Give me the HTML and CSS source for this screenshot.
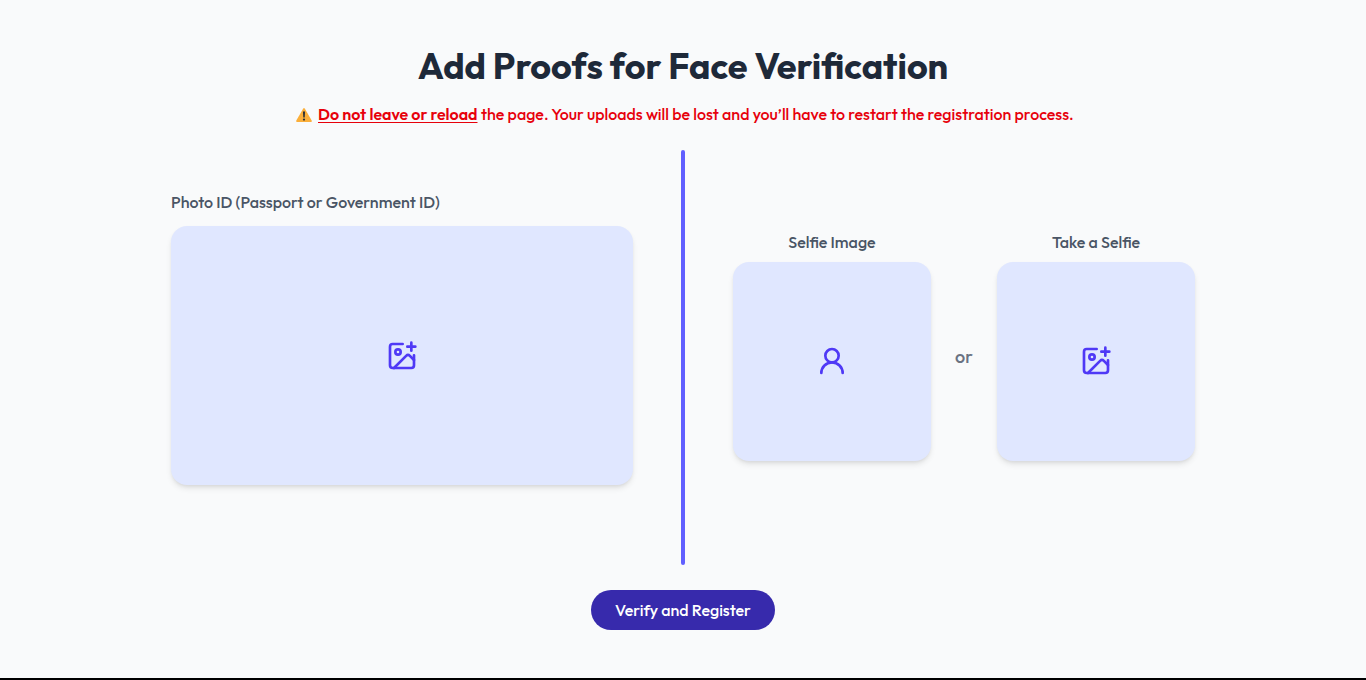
FILE: index.html
```html
<!DOCTYPE html>
<html lang="en">
<head>
<meta charset="utf-8">
<title>Face Verification</title>
<link rel="stylesheet" href="styles.css">
</head>
<body>
<main class="page">
  <h1 class="title">Add Proofs for Face Verification</h1>
  <p class="warning">
    <svg class="warning-icon" viewBox="0 0 16 14" preserveAspectRatio="none"><path d="M7.1 .7Q8 -.5 8.9 .7L15.7 12.6Q16.3 14 14.9 14H1.1Q-.3 14 .3 12.6Z" fill="#fbaf3a"/><path d="M6.9 3.7Q8 2.8 9.1 3.7L8.7 9.4H7.3Z" fill="#2d3136"/><circle cx="8" cy="11.6" r="1.1" fill="#2d3136"/></svg>
    <span class="warning-strong">Do not leave or reload</span>
    <span class="warning-text">the page. Your uploads will be lost and you’ll have to restart the registration process.</span>
  </p>
  <div class="columns">
    <section class="photo">
      <label class="label">Photo ID (Passport or Government ID)</label>
      <div class="drop drop-wide">
        <svg class="icon" viewBox="0 0 24 24"><path d="M16 5h6"/><path d="M19 2v6"/><path d="M21 11.5V19a2 2 0 0 1-2 2H5a2 2 0 0 1-2-2V5a2 2 0 0 1 2-2h7.5"/><path d="m21 15-3.086-3.086a2 2 0 0 0-2.828 0L6 21"/><circle cx="9" cy="9" r="2"/></svg>
      </div>
    </section>
    <div class="divider"></div>
    <section class="selfies">
      <div class="selfie">
        <label class="label">Selfie Image</label>
        <div class="drop drop-square">
          <svg class="icon" viewBox="0 0 24 24"><circle cx="12" cy="8" r="5"/><path d="M20 21a8 8 0 0 0-16 0"/></svg>
        </div>
      </div>
      <span class="or">or</span>
      <div class="selfie">
        <label class="label">Take a Selfie</label>
        <div class="drop drop-square">
          <svg class="icon" viewBox="0 0 24 24"><path d="M16 5h6"/><path d="M19 2v6"/><path d="M21 11.5V19a2 2 0 0 1-2 2H5a2 2 0 0 1-2-2V5a2 2 0 0 1 2-2h7.5"/><path d="m21 15-3.086-3.086a2 2 0 0 0-2.828 0L6 21"/><circle cx="9" cy="9" r="2"/></svg>
        </div>
      </div>
    </section>
  </div>
  <button class="submit">Verify and Register</button>
</main>
</body>
</html>
```
FILE: styles.css
```css
* { box-sizing: border-box; margin: 0; }
body {
  font-family: Outfit, Lato, "Liberation Sans", sans-serif;
  background: #f9fafb;
  color: #4a5565;
}
.page {
  height: 680px;
  padding-top: 46px;
  border-bottom: 2px solid #000;
  display: flex;
  flex-direction: column;
  align-items: center;
  overflow: hidden;
}
.title {
  font-size: 36px;
  line-height: 40px;
  font-weight: 700;
  color: #1e2939;
  white-space: nowrap;
}
.warning {
  display: flex;
  align-items: center;
  width: 775px;
  height: 24px;
  margin-top: 16px;
  font-size: 16px;
  line-height: 24px;
  font-weight: 500;
  color: #e7000b;
  white-space: nowrap;
}
.warning-icon { width: 16px; height: 14px; margin: 2px 6.5px 0 0; flex-shrink: 0; }
.warning-strong {
  flex-shrink: 0;
  width: 159px;
  margin-right: 4px;
  font-weight: 600;
  text-decoration: underline;
  text-decoration-thickness: 1px;
  text-underline-offset: 2px;
}
.columns {
  display: flex;
  width: 1024px;
  height: 415px;
  margin-top: 24px;
}
.photo { width: 462px; margin-right: 48px; padding-top: 40px; }
.label { display: block; font-size: 16px; line-height: 24px; font-weight: 500; white-space: nowrap; }
.drop {
  display: flex;
  align-items: center;
  justify-content: center;
  background: #e0e7ff;
  border-radius: 16px;
  box-shadow: 0 4px 6px -1px rgb(0 0 0 / .1), 0 2px 4px -2px rgb(0 0 0 / .1);
}
.drop-wide { height: 259px; margin-top: 12px; }
.icon {
  width: 32px;
  height: 32px;
  fill: none;
  stroke: #4f39f6;
  stroke-width: 2;
  stroke-linecap: round;
  stroke-linejoin: round;
}
.divider { width: 4px; border-radius: 2px; background: #615fff; }
.selfies { display: flex; margin-left: 48px; padding-top: 80px; }
.selfie { width: 198px; text-align: center; }
.drop-square { height: 199px; margin-top: 8px; padding-bottom: 1px; }
.or {
  width: 66px;
  padding-top: 113px;
  text-align: center;
  font-size: 18px;
  line-height: 28px;
  font-weight: 500;
  color: #6a7282;
}
.submit {
  width: 184px;
  height: 40px;
  margin-top: 25px;
  padding: 0;
  border: 0;
  border-radius: 20px;
  background: #372aac;
  color: #fff;
  font: 500 16px/24px Outfit, Lato, "Liberation Sans", sans-serif;
}
```
